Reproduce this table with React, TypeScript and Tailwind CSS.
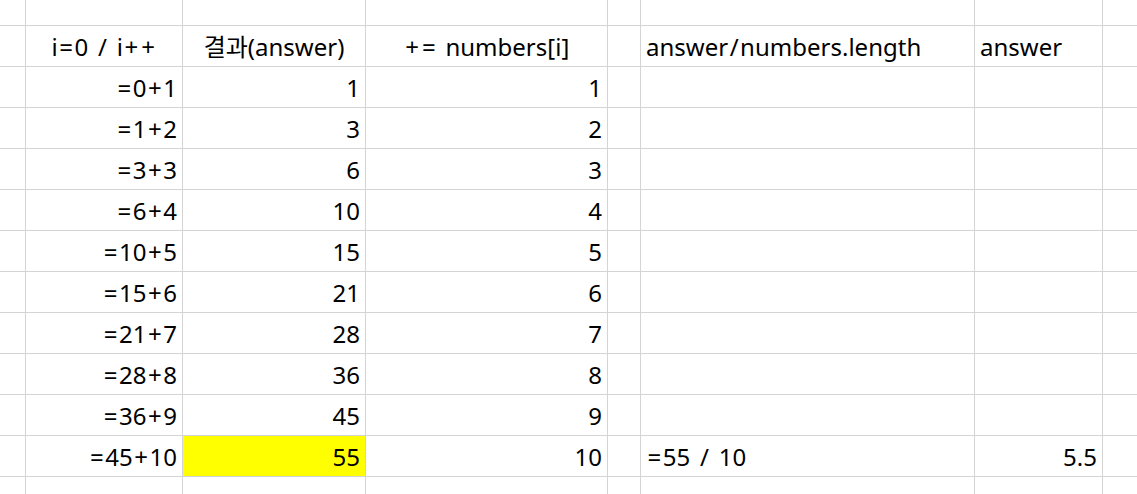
import React from "react";

type Row = {
  expr: string;
  answer: string;
  num: string;
  avg?: string;
  result?: string;
  highlight?: boolean;
};

const rows: Row[] = [
  { expr: "=0+1", answer: "1", num: "1" },
  { expr: "=1+2", answer: "3", num: "2" },
  { expr: "=3+3", answer: "6", num: "3" },
  { expr: "=6+4", answer: "10", num: "4" },
  { expr: "=10+5", answer: "15", num: "5" },
  { expr: "=15+6", answer: "21", num: "6" },
  { expr: "=21+7", answer: "28", num: "7" },
  { expr: "=28+8", answer: "36", num: "8" },
  { expr: "=36+9", answer: "45", num: "9" },
  { expr: "=45+10", answer: "55", num: "10", avg: "=55 / 10", result: "5.5", highlight: true },
];

// the sheet font draws = + / and spaces wider than Noto Sans, so pad them a bit
function Txt({ text }: { text: string }) {
  return (
    <>
      {text.split("").map((ch, i) =>
        ch === "=" || ch === "+" || ch === "/" ? (
          <span key={i} className="mx-[1.5px]">
            {ch}
          </span>
        ) : ch === " " ? (
          <span key={i} className="mx-[1px]">
            {" "}
          </span>
        ) : (
          <React.Fragment key={i}>{ch}</React.Fragment>
        )
      )}
    </>
  );
}

function Cell({
  text,
  align = "left",
  yellow = false,
}: {
  text?: string;
  align?: "left" | "right" | "center";
  yellow?: boolean;
}) {
  const justify =
    align === "right" ? "justify-end pr-[5px]" : align === "center" ? "justify-center" : "justify-start pl-[5px]";
  return (
    <div
      className={`flex items-end pb-[3px] whitespace-pre ${justify} ${yellow ? "bg-[#ffff00]" : "bg-white"}`}
    >
      {text && <Txt text={text} />}
    </div>
  );
}

export default function App() {
  return (
    <div
      className="h-[494px] w-[1137px] overflow-hidden bg-[#d4d4d4] grid grid-cols-[25px_156px_182px_241px_32px_333px_127px_1fr] grid-rows-[25px_repeat(11,40px)_1fr] gap-px text-[24px] leading-[32px] text-black"
      style={{ fontFamily: '"Noto Sans", "Noto Sans CJK KR", sans-serif' }}
    >
      {/* top partial row */}
      {Array.from({ length: 8 }).map((_, i) => (
        <Cell key={`top-${i}`} />
      ))}

      {/* header */}
      <Cell />
      <Cell align="center" text="i=0 / i++" />
      <Cell align="center" text="결과(answer)" />
      <Cell align="center" text="+= numbers[i]" />
      <Cell />
      <Cell text="answer/numbers.length" />
      <Cell text="answer" />
      <Cell />

      {rows.map((r) => (
        <React.Fragment key={r.expr}>
          <Cell />
          <Cell align="right" text={r.expr} />
          <Cell align="right" text={r.answer} yellow={r.highlight} />
          <Cell align="right" text={r.num} />
          <Cell />
          <Cell text={r.avg} />
          <Cell align="right" text={r.result} />
          <Cell />
        </React.Fragment>
      ))}

      {/* bottom partial row */}
      {Array.from({ length: 8 }).map((_, i) => (
        <Cell key={`bottom-${i}`} />
      ))}
    </div>
  );
}
